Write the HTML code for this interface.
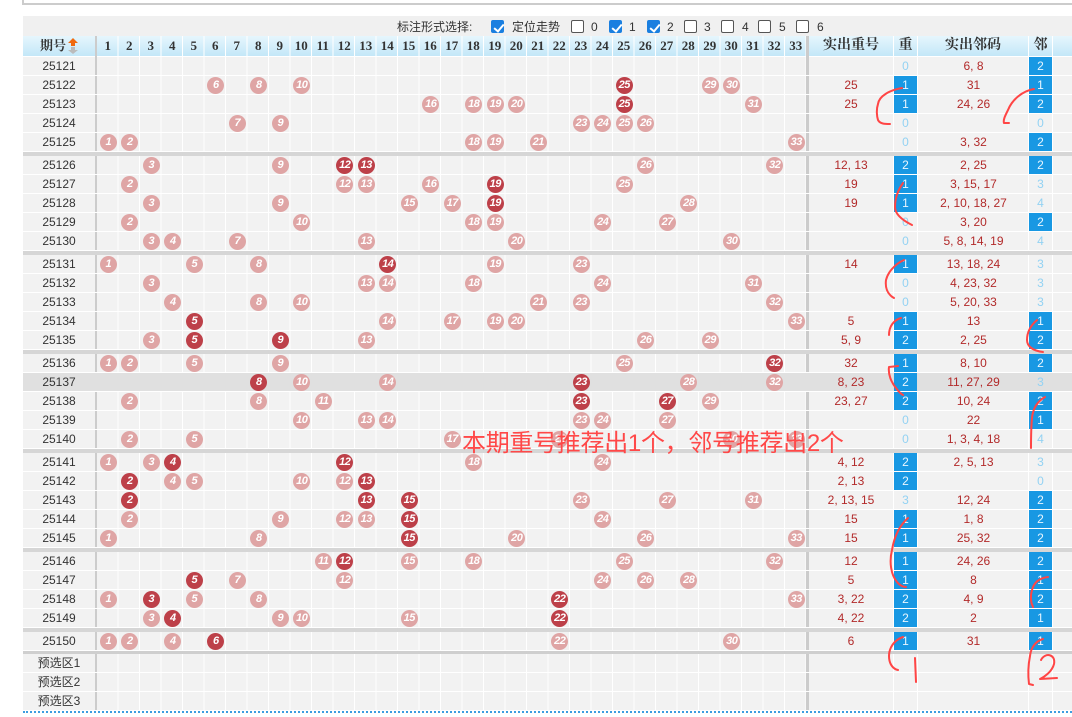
<!DOCTYPE html>
<html><head><meta charset="utf-8"><style>
*{margin:0;padding:0;box-sizing:border-box}
body{width:1072px;height:717px;overflow:hidden;background:#fff;position:relative;font-family:"Liberation Sans","Noto Sans CJK SC",sans-serif;font-size:12px;color:#333}
.a{position:absolute}
.topbox{left:22px;top:-2px;width:1060px;height:7px;border:2px solid #ccc;border-top:none}
.band{left:23px;top:16px;width:1049px;height:20px;background:#f0f0f0}
.cb{position:absolute;top:20px;width:13px;height:13px;border:1px solid #555;border-radius:2px;background:#fff}
.cb.on{background:#1a7fe0;border-color:#1a7fe0}
.cb.on:after{content:"";position:absolute;left:3.5px;top:0.5px;width:4px;height:8px;border:solid #fff;border-width:0 2px 2px 0;transform:rotate(40deg)}
.lb{position:absolute;top:19px;font-size:12px;color:#333;line-height:16px}
.hdr{left:23px;top:36px;width:1049px;height:20px;background:linear-gradient(#e6f6fd,#c3e7f8)}
.h{position:absolute;top:36px;height:20px;line-height:20px;text-align:center;font-weight:bold;font-family:"Liberation Serif","Noto Serif CJK SC",serif;font-size:13px;color:#333}
.tb{left:23px;top:57px;width:1049px;height:654px;background:#f2f2f2}
.r{position:absolute;left:23px;width:1049px;height:19px;border-bottom:1px solid #fff}
.r.g{background:#e0e0e0}
.p{position:absolute;left:0;width:72px;text-align:center;line-height:18px;font-size:12px;color:#333}
.vl{position:absolute;top:36px;height:675px;width:1px;background:#fff}
.grid{position:absolute;left:97px;top:36px;width:709px;height:675px;background:repeating-linear-gradient(90deg,transparent 0 20.5px,#fff 20.5px 21.5px)}
.sep{position:absolute;left:23px;width:1049px;height:4px;background:#d6d6d6}
.vd{position:absolute;top:36px;height:675px;width:3px;background:#ccc}
.b{position:absolute;top:1px;width:17px;height:17px;border-radius:50%;background:#dfa5a5;color:#fff;font-weight:bold;font-size:11px;line-height:17px;text-align:center;font-family:"Liberation Sans",sans-serif;letter-spacing:-0.5px}
.b.d{background:#bd4049}
.c1{left:76.75px}.c2{left:98.25px}.c3{left:119.75px}.c4{left:141.25px}.c5{left:162.75px}.c6{left:184.25px}.c7{left:205.75px}.c8{left:227.25px}.c9{left:248.75px}.c10{left:270.25px}.c11{left:291.75px}.c12{left:313.25px}.c13{left:334.75px}.c14{left:356.25px}.c15{left:377.75px}.c16{left:399.25px}.c17{left:420.75px}.c18{left:442.25px}.c19{left:463.75px}.c20{left:485.25px}.c21{left:506.75px}.c22{left:528.25px}.c23{left:549.75px}.c24{left:571.25px}.c25{left:592.75px}.c26{left:614.25px}.c27{left:635.75px}.c28{left:657.25px}.c29{left:678.75px}.c30{left:700.25px}.c31{left:721.75px}.c32{left:743.25px}.c33{left:764.75px}
.cz{position:absolute;left:786px;width:84px;text-align:center;line-height:18px;color:#b22a2a;font-size:12px}
.z{position:absolute;left:871px;width:23px;height:18px;text-align:center;line-height:18px;color:#93d2f3;font-size:12px}
.z.on{background:#1898e3;color:#e8f6ff}
.lm{position:absolute;left:896px;width:109px;text-align:center;line-height:18px;color:#b22a2a;font-size:12px}
.l{position:absolute;left:1006px;width:23px;height:18px;text-align:center;line-height:18px;color:#93d2f3;font-size:12px}
.l.on{background:#1898e3;color:#e8f6ff}
.big{left:462px;top:429px;font-size:24px;color:#ff4848;white-space:nowrap;line-height:30px;letter-spacing:-0.3px;font-family:"Liberation Sans","Noto Sans CJK SC",sans-serif}
.dot{left:23px;top:711px;width:1049px;height:0;border-top:2px dotted #3d9ee0}
</style></head><body>
<div class="a topbox"></div>
<div class="a band"></div>
<div class="lb" style="left:397px">标注形式选择:</div>
<div class="cb on" style="left:491px"></div><div class="lb" style="left:512px">定位走势</div>
<div class="cb" style="left:571px"></div><div class="lb" style="left:591px">0</div>
<div class="cb on" style="left:609px"></div><div class="lb" style="left:629px">1</div>
<div class="cb on" style="left:647px"></div><div class="lb" style="left:667px">2</div>
<div class="cb" style="left:684px"></div><div class="lb" style="left:704px">3</div>
<div class="cb" style="left:721px"></div><div class="lb" style="left:742px">4</div>
<div class="cb" style="left:758px"></div><div class="lb" style="left:779px">5</div>
<div class="cb" style="left:796px"></div><div class="lb" style="left:817px">6</div>

<div class="a hdr"></div>
<div class="a tb"></div>
<div class="grid"></div>
<div class="vl" style="left:893px"></div><div class="vl" style="left:917px"></div><div class="vl" style="left:1028px"></div><div class="vl" style="left:1052px"></div>
<div class="vd" style="left:95px;width:2px"></div>
<div class="vd" style="left:806px"></div>

<div class="h" style="left:40px;width:27px;text-align:left">期号</div>
<svg class="a" style="left:67px;top:37px" width="12" height="18"><path d="M6 1 L11 6 H8 V9 H4 V6 H1 Z" fill="#f06a10"/><path d="M4 10 H8 V13 H11 L6 17 L1 13 H4 Z" fill="#bbb"/></svg>
<div class="h" style="left:97px;width:21.5px">1</div><div class="h" style="left:118.5px;width:21.5px">2</div><div class="h" style="left:140px;width:21.5px">3</div><div class="h" style="left:161.5px;width:21.5px">4</div><div class="h" style="left:183px;width:21.5px">5</div><div class="h" style="left:204.5px;width:21.5px">6</div><div class="h" style="left:226px;width:21.5px">7</div><div class="h" style="left:247.5px;width:21.5px">8</div><div class="h" style="left:269px;width:21.5px">9</div><div class="h" style="left:290.5px;width:21.5px">10</div><div class="h" style="left:312px;width:21.5px">11</div><div class="h" style="left:333.5px;width:21.5px">12</div><div class="h" style="left:355px;width:21.5px">13</div><div class="h" style="left:376.5px;width:21.5px">14</div><div class="h" style="left:398px;width:21.5px">15</div><div class="h" style="left:419.5px;width:21.5px">16</div><div class="h" style="left:441px;width:21.5px">17</div><div class="h" style="left:462.5px;width:21.5px">18</div><div class="h" style="left:484px;width:21.5px">19</div><div class="h" style="left:505.5px;width:21.5px">20</div><div class="h" style="left:527px;width:21.5px">21</div><div class="h" style="left:548.5px;width:21.5px">22</div><div class="h" style="left:570px;width:21.5px">23</div><div class="h" style="left:591.5px;width:21.5px">24</div><div class="h" style="left:613px;width:21.5px">25</div><div class="h" style="left:634.5px;width:21.5px">26</div><div class="h" style="left:656px;width:21.5px">27</div><div class="h" style="left:677.5px;width:21.5px">28</div><div class="h" style="left:699px;width:21.5px">29</div><div class="h" style="left:720.5px;width:21.5px">30</div><div class="h" style="left:742px;width:21.5px">31</div><div class="h" style="left:763.5px;width:21.5px">32</div><div class="h" style="left:785px;width:21.5px">33</div>
<div class="h" style="left:809px;width:84px;font-size:14px">实出重号</div>
<div class="h" style="left:894px;width:23px;font-size:14px">重</div>
<div class="h" style="left:918px;width:110px;font-size:14px">实出邻码</div>
<div class="h" style="left:1029px;width:23px;font-size:14px">邻</div>

<div class="r" style="top:57px"><span class="p">25121</span><span class="z">0</span><span class="lm">6, 8</span><span class="l on">2</span></div>
<div class="r" style="top:76px"><span class="p">25122</span><i class="b c6">6</i><i class="b c8">8</i><i class="b c10">10</i><i class="b d c25">25</i><i class="b c29">29</i><i class="b c30">30</i><span class="cz">25</span><span class="z on">1</span><span class="lm">31</span><span class="l on">1</span></div>
<div class="r" style="top:95px"><span class="p">25123</span><i class="b c16">16</i><i class="b c18">18</i><i class="b c19">19</i><i class="b c20">20</i><i class="b d c25">25</i><i class="b c31">31</i><span class="cz">25</span><span class="z on">1</span><span class="lm">24, 26</span><span class="l on">2</span></div>
<div class="r" style="top:114px"><span class="p">25124</span><i class="b c7">7</i><i class="b c9">9</i><i class="b c23">23</i><i class="b c24">24</i><i class="b c25">25</i><i class="b c26">26</i><span class="z">0</span><span class="l">0</span></div>
<div class="r" style="top:133px"><span class="p">25125</span><i class="b c1">1</i><i class="b c2">2</i><i class="b c18">18</i><i class="b c19">19</i><i class="b c21">21</i><i class="b c33">33</i><span class="z">0</span><span class="lm">3, 32</span><span class="l on">2</span></div>
<div class="sep" style="top:152px"></div>
<div class="r" style="top:156px"><span class="p">25126</span><i class="b c3">3</i><i class="b c9">9</i><i class="b d c12">12</i><i class="b d c13">13</i><i class="b c26">26</i><i class="b c32">32</i><span class="cz">12, 13</span><span class="z on">2</span><span class="lm">2, 25</span><span class="l on">2</span></div>
<div class="r" style="top:175px"><span class="p">25127</span><i class="b c2">2</i><i class="b c12">12</i><i class="b c13">13</i><i class="b c16">16</i><i class="b d c19">19</i><i class="b c25">25</i><span class="cz">19</span><span class="z on">1</span><span class="lm">3, 15, 17</span><span class="l">3</span></div>
<div class="r" style="top:194px"><span class="p">25128</span><i class="b c3">3</i><i class="b c9">9</i><i class="b c15">15</i><i class="b c17">17</i><i class="b d c19">19</i><i class="b c28">28</i><span class="cz">19</span><span class="z on">1</span><span class="lm">2, 10, 18, 27</span><span class="l">4</span></div>
<div class="r" style="top:213px"><span class="p">25129</span><i class="b c2">2</i><i class="b c10">10</i><i class="b c18">18</i><i class="b c19">19</i><i class="b c24">24</i><i class="b c27">27</i><span class="z">0</span><span class="lm">3, 20</span><span class="l on">2</span></div>
<div class="r" style="top:232px"><span class="p">25130</span><i class="b c3">3</i><i class="b c4">4</i><i class="b c7">7</i><i class="b c13">13</i><i class="b c20">20</i><i class="b c30">30</i><span class="z">0</span><span class="lm">5, 8, 14, 19</span><span class="l">4</span></div>
<div class="sep" style="top:251px"></div>
<div class="r" style="top:255px"><span class="p">25131</span><i class="b c1">1</i><i class="b c5">5</i><i class="b c8">8</i><i class="b d c14">14</i><i class="b c19">19</i><i class="b c23">23</i><span class="cz">14</span><span class="z on">1</span><span class="lm">13, 18, 24</span><span class="l">3</span></div>
<div class="r" style="top:274px"><span class="p">25132</span><i class="b c3">3</i><i class="b c13">13</i><i class="b c14">14</i><i class="b c18">18</i><i class="b c24">24</i><i class="b c31">31</i><span class="z">0</span><span class="lm">4, 23, 32</span><span class="l">3</span></div>
<div class="r" style="top:293px"><span class="p">25133</span><i class="b c4">4</i><i class="b c8">8</i><i class="b c10">10</i><i class="b c21">21</i><i class="b c23">23</i><i class="b c32">32</i><span class="z">0</span><span class="lm">5, 20, 33</span><span class="l">3</span></div>
<div class="r" style="top:312px"><span class="p">25134</span><i class="b d c5">5</i><i class="b c14">14</i><i class="b c17">17</i><i class="b c19">19</i><i class="b c20">20</i><i class="b c33">33</i><span class="cz">5</span><span class="z on">1</span><span class="lm">13</span><span class="l on">1</span></div>
<div class="r" style="top:331px"><span class="p">25135</span><i class="b c3">3</i><i class="b d c5">5</i><i class="b d c9">9</i><i class="b c13">13</i><i class="b c26">26</i><i class="b c29">29</i><span class="cz">5, 9</span><span class="z on">2</span><span class="lm">2, 25</span><span class="l on">2</span></div>
<div class="sep" style="top:350px"></div>
<div class="r" style="top:354px"><span class="p">25136</span><i class="b c1">1</i><i class="b c2">2</i><i class="b c5">5</i><i class="b c9">9</i><i class="b c25">25</i><i class="b d c32">32</i><span class="cz">32</span><span class="z on">1</span><span class="lm">8, 10</span><span class="l on">2</span></div>
<div class="r g" style="top:373px"><span class="p">25137</span><i class="b d c8">8</i><i class="b c10">10</i><i class="b c14">14</i><i class="b d c23">23</i><i class="b c28">28</i><i class="b c32">32</i><span class="cz">8, 23</span><span class="z on">2</span><span class="lm">11, 27, 29</span><span class="l">3</span></div>
<div class="r" style="top:392px"><span class="p">25138</span><i class="b c2">2</i><i class="b c8">8</i><i class="b c11">11</i><i class="b d c23">23</i><i class="b d c27">27</i><i class="b c29">29</i><span class="cz">23, 27</span><span class="z on">2</span><span class="lm">10, 24</span><span class="l on">2</span></div>
<div class="r" style="top:411px"><span class="p">25139</span><i class="b c10">10</i><i class="b c13">13</i><i class="b c14">14</i><i class="b c23">23</i><i class="b c24">24</i><i class="b c27">27</i><span class="z">0</span><span class="lm">22</span><span class="l on">1</span></div>
<div class="r" style="top:430px"><span class="p">25140</span><i class="b c2">2</i><i class="b c5">5</i><i class="b c17">17</i><i class="b c22">22</i><i class="b c30">30</i><i class="b c33">33</i><span class="z">0</span><span class="lm">1, 3, 4, 18</span><span class="l">4</span></div>
<div class="sep" style="top:449px"></div>
<div class="r" style="top:453px"><span class="p">25141</span><i class="b c1">1</i><i class="b c3">3</i><i class="b d c4">4</i><i class="b d c12">12</i><i class="b c18">18</i><i class="b c24">24</i><span class="cz">4, 12</span><span class="z on">2</span><span class="lm">2, 5, 13</span><span class="l">3</span></div>
<div class="r" style="top:472px"><span class="p">25142</span><i class="b d c2">2</i><i class="b c4">4</i><i class="b c5">5</i><i class="b c10">10</i><i class="b c12">12</i><i class="b d c13">13</i><span class="cz">2, 13</span><span class="z on">2</span><span class="l">0</span></div>
<div class="r" style="top:491px"><span class="p">25143</span><i class="b d c2">2</i><i class="b d c13">13</i><i class="b d c15">15</i><i class="b c23">23</i><i class="b c27">27</i><i class="b c31">31</i><span class="cz">2, 13, 15</span><span class="z">3</span><span class="lm">12, 24</span><span class="l on">2</span></div>
<div class="r" style="top:510px"><span class="p">25144</span><i class="b c2">2</i><i class="b c9">9</i><i class="b c12">12</i><i class="b c13">13</i><i class="b d c15">15</i><i class="b c24">24</i><span class="cz">15</span><span class="z on">1</span><span class="lm">1, 8</span><span class="l on">2</span></div>
<div class="r" style="top:529px"><span class="p">25145</span><i class="b c1">1</i><i class="b c8">8</i><i class="b d c15">15</i><i class="b c20">20</i><i class="b c26">26</i><i class="b c33">33</i><span class="cz">15</span><span class="z on">1</span><span class="lm">25, 32</span><span class="l on">2</span></div>
<div class="sep" style="top:548px"></div>
<div class="r" style="top:552px"><span class="p">25146</span><i class="b c11">11</i><i class="b d c12">12</i><i class="b c15">15</i><i class="b c18">18</i><i class="b c25">25</i><i class="b c32">32</i><span class="cz">12</span><span class="z on">1</span><span class="lm">24, 26</span><span class="l on">2</span></div>
<div class="r" style="top:571px"><span class="p">25147</span><i class="b d c5">5</i><i class="b c7">7</i><i class="b c12">12</i><i class="b c24">24</i><i class="b c26">26</i><i class="b c28">28</i><span class="cz">5</span><span class="z on">1</span><span class="lm">8</span><span class="l on">1</span></div>
<div class="r" style="top:590px"><span class="p">25148</span><i class="b c1">1</i><i class="b d c3">3</i><i class="b c5">5</i><i class="b c8">8</i><i class="b d c22">22</i><i class="b c33">33</i><span class="cz">3, 22</span><span class="z on">2</span><span class="lm">4, 9</span><span class="l on">2</span></div>
<div class="r" style="top:609px"><span class="p">25149</span><i class="b c3">3</i><i class="b d c4">4</i><i class="b c9">9</i><i class="b c10">10</i><i class="b c15">15</i><i class="b d c22">22</i><span class="cz">4, 22</span><span class="z on">2</span><span class="lm">2</span><span class="l on">1</span></div>
<div class="sep" style="top:628px"></div>
<div class="r" style="top:632px"><span class="p">25150</span><i class="b c1">1</i><i class="b c2">2</i><i class="b c4">4</i><i class="b d c6">6</i><i class="b c22">22</i><i class="b c30">30</i><span class="cz">6</span><span class="z on">1</span><span class="lm">31</span><span class="l on">1</span></div>
<div class="sep" style="top:651px;height:3px;background:#cfcfcf"></div>
<div class="r" style="top:654px"><span class="p">预选区1</span></div>
<div class="r" style="top:673px"><span class="p">预选区2</span></div>
<div class="r" style="top:692px"><span class="p">预选区3</span></div>
<div class="a dot"></div>

<div class="a big">本期重号推荐出1个，邻号推荐出2个</div>

<svg class="a" style="left:0;top:0" width="1072" height="717" fill="none" stroke="#ff4545" stroke-width="2" stroke-linecap="round" stroke-linejoin="round">
<path d="M902 88 C890 90 879 96 878 104 C876 110 877 117 878 120 C880 124 885 124 890 124"/>
<path d="M1034 89 C1022 91 1012 100 1008 110 C1005 116 1003 120 1004 123 L1009 123"/>
<path d="M903 183 C898 190 895 198 895 207 C895 214 902 220 912 225"/>
<path d="M904 260 C895 264 888 272 886 280 C885 288 887 294 894 298"/>
<path d="M901 318 C894 320 889 326 889 335"/>
<path d="M1037 320 C1030 326 1027 333 1027 340 C1027 347 1034 351 1043 352"/>
<path d="M898 366 L889 367 C888 374 891 382 896 388 C899 392 901 394 903 395"/>
<path d="M1045 397 C1038 401 1033 408 1032 418 C1031 428 1031 440 1031 448"/>
<path d="M908 518 C899 526 894 538 892 550 C889 562 891 575 897 582 C900 586 904 587 906 587"/>
<path d="M1048 577 C1040 578 1034 582 1032 590 C1030 597 1031 603 1033 607"/>
<path d="M903 637 C894 640 889 648 889 656 C889 664 893 669 898 670"/>
<path d="M915 658 L916 682"/>
<path d="M1043 639 C1036 641 1031 647 1030 656 C1028 666 1028 676 1029 684 L1033 685"/>
<path d="M1041 660 C1045 652 1056 654 1054 664 C1052 672 1044 677 1040 679 L1057 678"/>
</svg>
</body></html>
